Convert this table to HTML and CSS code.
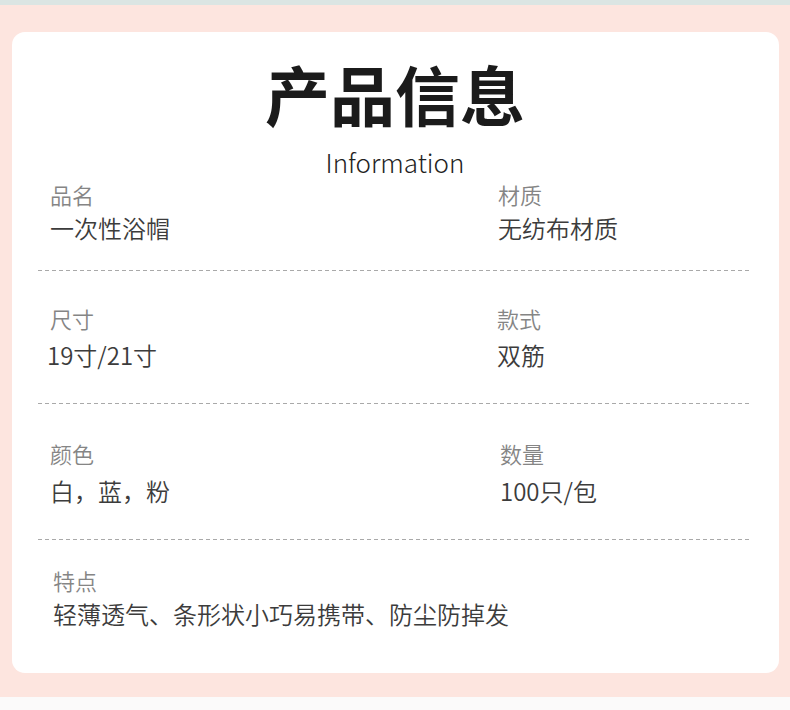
FILE: index.html
```html
<!DOCTYPE html>
<html lang="zh-CN">
<head>
<meta charset="utf-8">
<title>产品信息</title>
<link rel="stylesheet" href="styles.css">
</head>
<body>
<div class="top-strip"></div>
<div class="stage">
  <section class="card">
    <header class="head">
      <h1 class="title">产品信息</h1>
      <p class="subtitle">Information</p>
    </header>
    <div class="row row-1">
      <div class="cell"><div class="label">品名</div><div class="value">一次性浴帽</div></div>
      <div class="cell"><div class="label">材质</div><div class="value">无纺布材质</div></div>
    </div>
    <div class="row row-2">
      <div class="cell"><div class="label">尺寸</div><div class="value value-num">19寸/21寸</div></div>
      <div class="cell cell-shift-l"><div class="label">款式</div><div class="value">双筋</div></div>
    </div>
    <div class="row row-3">
      <div class="cell"><div class="label">颜色</div><div class="value">白，蓝，粉</div></div>
      <div class="cell cell-shift-r"><div class="label">数量</div><div class="value">100只/包</div></div>
    </div>
    <div class="row row-4 row-last">
      <div class="cell cell-wide"><div class="label">特点</div><div class="value">轻薄透气、条形状小巧易携带、防尘防掉发</div></div>
    </div>
  </section>
</div>
<div class="bottom-strip"></div>
</body>
</html>
```

FILE: styles.css
```css
html, body {
  margin: 0;
  padding: 0;
}
body {
  width: 790px;
  height: 710px;
  overflow: hidden;
  background: #fbfafa;
  font-family: "Noto Sans CJK SC", "Noto Sans", sans-serif;
}
.top-strip {
  height: 5px;
  background: #dbe5e3;
}
.stage {
  height: 692px;
  box-sizing: border-box;
  background: #fde5df;
  padding: 27px 11px 0 12px;
}
.card {
  height: 641px;
  box-sizing: border-box;
  background: #ffffff;
  border-radius: 13px;
  padding: 29px 27px 0 26px;
}
.head {
  text-align: center;
}
.title {
  margin: 0;
  font-size: 65px;
  line-height: 64px;
  font-weight: 700;
  color: #1b1b1b;
}
.subtitle {
  margin: 22px 0 0;
  font-size: 26px;
  line-height: 30px;
  font-weight: 300;
  color: #222222;
}
.row {
  display: grid;
  grid-template-columns: 448px 1fr;
  padding-left: 12px;
  background-image: repeating-linear-gradient(to right, #a9a9a9 0 4px, transparent 4px 7px);
  background-size: 100% 1px;
  background-repeat: no-repeat;
  background-position: left bottom;
}
.row-last {
  background-image: none;
}
.cell-wide {
  grid-column: 1 / span 2;
}
.label {
  font-size: 22px;
  line-height: 30px;
  font-weight: 350;
  color: #858585;
}
.value {
  font-size: 24px;
  line-height: 32px;
  font-weight: 350;
  color: #3c3c3c;
}
.row-1 { padding-top: 2px; padding-bottom: 27px; }
.row-1 .value { margin-top: 3px; }
.row-2 { padding-top: 32px; padding-bottom: 33px; }
.row-2 .value { margin-top: 6px; }
.row-3 { padding-top: 34px; padding-bottom: 33px; }
.row-3 .value { margin-top: 7px; }
.row-4 { padding-top: 25px; padding-left: 15px; }
.row-4 .value { margin-top: 3px; }
.value-num { margin-left: -3px; }
.cell-shift-l { margin-left: -1px; }
.cell-shift-r { margin-left: 2px; }
```
